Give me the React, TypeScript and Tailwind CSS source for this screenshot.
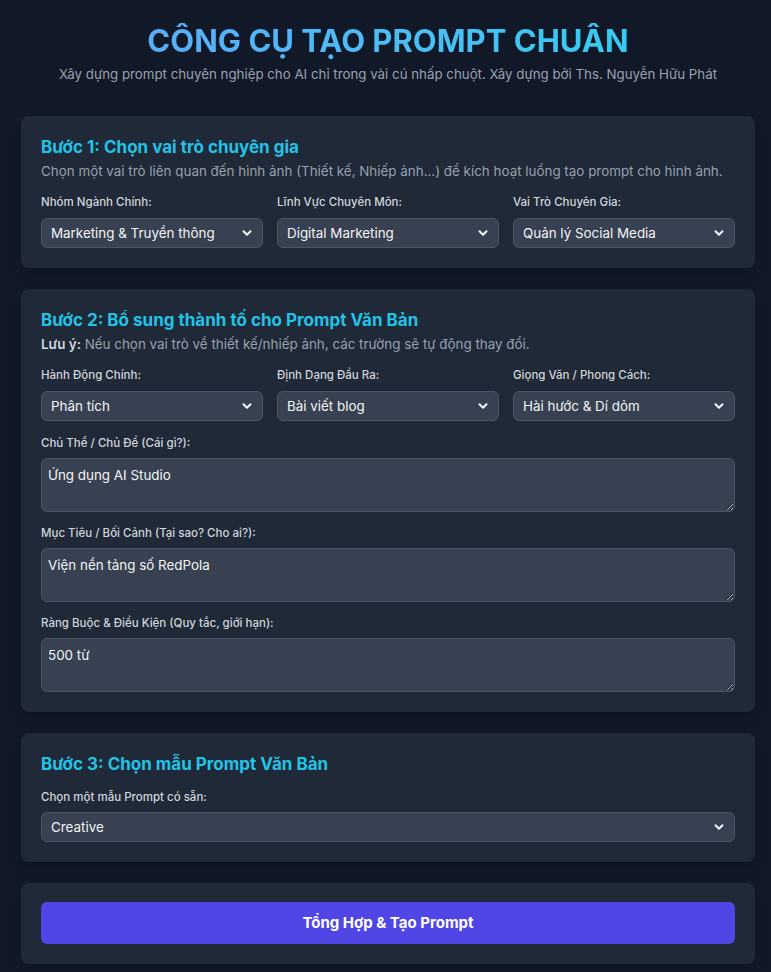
import { ChevronDown } from 'lucide-react';

const font = { fontFamily: 'Inter, "Noto Sans", sans-serif' };

function Select({ value, options }: { value: string; options?: string[] }) {
  const opts = options ?? [value];
  return (
    <div className="relative">
      <select
        defaultValue={value}
        className="h-[30px] w-full appearance-none rounded-md border border-[#4b5563] bg-[#374151] pl-[9px] pr-8 text-[13.4px] text-gray-100 outline-none"
      >
        {opts.map((o) => (
          <option key={o}>{o}</option>
        ))}
      </select>
      <ChevronDown
        className="pointer-events-none absolute right-[9px] top-1/2 size-[14px] -translate-y-1/2 text-gray-100"
        strokeWidth={3.5}
      />
    </div>
  );
}

function Field({
  label,
  gap = 'gap-[8px]',
  children,
}: {
  label: string;
  gap?: string;
  children: React.ReactNode;
}) {
  return (
    <div className={`flex flex-col ${gap}`}>
      <label className="text-[11.5px] font-medium leading-4 text-gray-300">{label}</label>
      {children}
    </div>
  );
}

function Area({ label, value }: { label: string; value: string }) {
  return (
    <Field label={label} gap="gap-[7px]">
      <textarea
        defaultValue={value}
        className="block h-[54px] w-full resize-y rounded-md border border-[#4b5563] bg-[#374151] px-[6px] pb-[6px] pt-[6px] text-[13.4px] leading-5 text-gray-100 outline-none"
      />
    </Field>
  );
}

function Card({ children }: { children: React.ReactNode }) {
  return <section className="rounded-lg bg-[#1f2937] px-5 pb-5 pt-[19px] shadow-lg">{children}</section>;
}

function StepTitle({ children }: { children: React.ReactNode }) {
  return <h2 className="text-[17px] font-bold leading-6 text-[#22c3e6]">{children}</h2>;
}

export default function App() {
  return (
    <div className="min-h-screen bg-[#111827] pb-[9px] pl-[21px] pr-[16px] pt-[23px]" style={font}>
      <header className="mb-[31px] text-center">
        <h1 className="bg-gradient-to-r from-[#60a5fa] to-[#22d3ee] bg-clip-text text-[31px] font-bold leading-9 text-transparent">
          CÔNG CỤ TẠO PROMPT CHUẨN
        </h1>
        <p className="mt-[6px] text-[13.3px] text-gray-400">
          Xây dựng prompt chuyên nghiệp cho AI chỉ trong vài cú nhấp chuột. Xây dựng bởi Ths. Nguyễn Hữu Phát
        </p>
      </header>

      <div className="flex flex-col gap-[21px]">
        <Card>
          <StepTitle>Bước 1: Chọn vai trò chuyên gia</StepTitle>
          <p className="mt-[2px] text-[13.4px] leading-5 text-gray-400">
            Chọn một vai trò liên quan đến hình ảnh (Thiết kế, Nhiếp ảnh...) để kích hoạt luồng tạo prompt cho hình ảnh.
          </p>
          <div className="mt-[13px] grid grid-cols-3 gap-[14px]">
            <Field label="Nhóm Ngành Chính:">
              <Select value="Marketing & Truyền thông" />
            </Field>
            <Field label="Lĩnh Vực Chuyên Môn:">
              <Select value="Digital Marketing" />
            </Field>
            <Field label="Vai Trò Chuyên Gia:">
              <Select value="Quản lý Social Media" />
            </Field>
          </div>
        </Card>

        <Card>
          <StepTitle>Bước 2: Bổ sung thành tố cho Prompt Văn Bản</StepTitle>
          <p className="mt-[2px] text-[13.4px] leading-5 text-gray-400">
            <span className="font-semibold text-gray-300">Lưu ý:</span> Nếu chọn vai trò về thiết kế/nhiếp ảnh, các
            trường sẽ tự động thay đổi.
          </p>
          <div className="mt-[13px] grid grid-cols-3 gap-[14px]">
            <Field label="Hành Động Chính:">
              <Select value="Phân tích" />
            </Field>
            <Field label="Định Dạng Đầu Ra:">
              <Select value="Bài viết blog" />
            </Field>
            <Field label="Giọng Văn / Phong Cách:">
              <Select value="Hài hước & Dí dỏm" />
            </Field>
          </div>
          <div className="mt-[14px] flex flex-col gap-[13px]">
            <Area label="Chủ Thể / Chủ Đề (Cái gì?):" value="Ứng dụng AI Studio" />
            <Area label="Mục Tiêu / Bối Cảnh (Tại sao? Cho ai?):" value="Viện nền tảng số RedPola" />
            <Area label="Ràng Buộc & Điều Kiện (Quy tắc, giới hạn):" value="500 từ" />
          </div>
        </Card>

        <Card>
          <StepTitle>Bước 3: Chọn mẫu Prompt Văn Bản</StepTitle>
          <div className="mt-[13px]">
            <Field label="Chọn một mẫu Prompt có sẵn:" gap="gap-[7px]">
              <Select value="Creative" />
            </Field>
          </div>
        </Card>

        <Card>
          <button className="h-[42px] w-full rounded-md bg-[#4f46e5] text-[15px] font-bold text-white">
            Tổng Hợp &amp; Tạo Prompt
          </button>
        </Card>
      </div>
    </div>
  );
}
